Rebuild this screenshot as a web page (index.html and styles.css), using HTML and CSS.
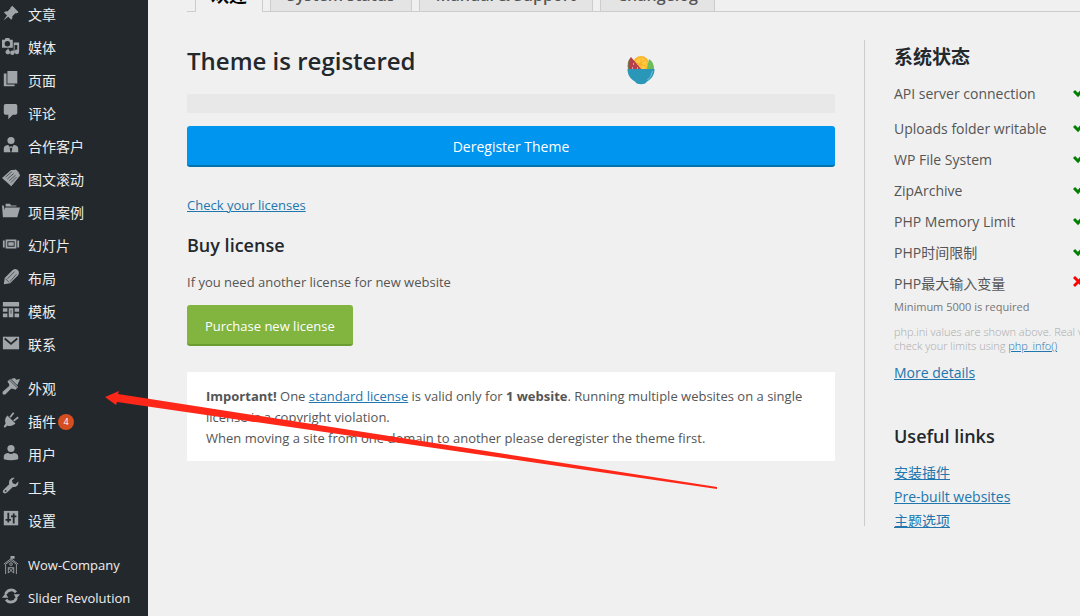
FILE: index.html
```html
<!DOCTYPE html>
<html lang="zh-CN">
<head>
<meta charset="utf-8">
<meta name="viewport" content="width=device-width, initial-scale=1">
<title>Theme is registered</title>
<link rel="stylesheet" href="styles.css">
</head>
<body>
<div class="app">
  <nav class="sidebar" aria-label="Admin menu">
    <ul class="menu">
      <li><a class="item" href="#"><svg class="icon" viewBox="0 0 20 20"><path d="M10.400 3l1-1 6.900 6.900-1 1a3.300 3.300 0 0 1-2.400.3l-3.400 3.500c.2 1.500-.2 2.800-1.200 3.800l-3.400-3.400-5.500 4.200 4.200-5.500-3.400-3.400c1-1 2.300-1.400 3.800-1.200l3.500-3.400c-.2-1 .1-1.600.9-1.800z"/></svg>文章</a></li>
      <li><a class="item" href="#"><svg class="icon" viewBox="0 0 20 20"><path fill-rule="evenodd" d="M1 3h2l1-2h4l1 2h3v9H0V3zm5 1.500a3 3 0 1 0 0 6 3 3 0 0 0 0-6zM13 6h6v10.500a2.500 2.500 0 1 1-2-2.400V9h-3v8.500A2.500 2.500 0 1 1 11.500 15H13zM6 13h1.500v1.500a2.500 2.500 0 1 1-1.500-.2z"/></svg>媒体</a></li>
      <li><a class="item" href="#"><svg class="icon" viewBox="0 0 20 20"><path d="M6 1h11v14H6zM2 4h3v12h9v2H2z"/></svg>页面</a></li>
      <li><a class="item" href="#"><svg class="icon" viewBox="0 0 20 20"><path d="M4 1h11q2 0 2 2v8q0 2-2 2h-3l-5 5v-5H4q-2 0-2-2V3q0-2 2-2z"/></svg>评论</a></li>
      <li><a class="item" href="#"><svg class="icon" viewBox="0 0 20 20"><circle cx="10" cy="5" r="4"/><path d="M2 18v-4c0-3 3-4 5-4l2 3 .5-2h1l.5 2 2-3c2 0 5 1 5 4v4h-7.500l1-4-1.500-1-1.500 1 1 4z"/></svg>合作客户</a></li>
      <li><a class="item" href="#"><svg class="icon" viewBox="0 0 20 20"><path d="M0 10 10 1l6 0 4 6-10 12z"/><path class="groove" d="M4 9l7-6M6 11l7-6M8 13l7-6M10 15l6-6"/><path class="thin" d="M14 1c3 0 5 3 5 7L10 19"/></svg>图文滚动</a></li>
      <li><a class="item" href="#"><svg class="icon" viewBox="0 0 20 20"><path d="M3.500 6H20l-3 11H1L0 4h2l1 5zM4 5V2h5l1 2h6v1z"/></svg>项目案例</a></li>
      <li><a class="item" href="#"><svg class="icon" viewBox="0 0 20 20"><path fill-rule="evenodd" d="M4 5h12v10H4zm2 2v6h8V7zM7 8h6v4H7zM1 6h2v8H1zM17 6h2v8h-2z"/></svg>幻灯片</a></li>
      <li><a class="item" href="#"><svg class="icon" viewBox="0 0 20 20"><path d="M2 18l1-7 8-8q3-3 6-1t1 6l-9 9z"/><path class="groove" d="M6 12l8-8M9 15l7-8M4 12l4 4"/></svg>布局</a></li>
      <li><a class="item" href="#"><svg class="icon" viewBox="0 0 20 20"><path d="M1 1h18v5H1zM1 8h5v4H1zM7.500 8h5v10h-5zM14 8h5v4h-5zM1 14h5v4H1zM14 14h5v4h-5z"/><path class="groove" d="M10 10v4"/></svg>模板</a></li>
      <li><a class="item" href="#"><svg class="icon" viewBox="0 0 20 20"><path d="M1 3h18v14H1z"/><path class="cut" d="M3 5l7 6 7-6"/></svg>联系</a></li>
    </ul>
    <ul class="menu">
      <li><a class="item" href="#"><svg class="icon" viewBox="0 0 20 20"><path d="M6 4l3-3 9 9-3 3-3-1-2 0-6 6q-2 1-3 0t0-3l7-6V7z"/><path d="M10 1l4-1 2 2 4-1-3 7z"/><path class="groove" d="M8 2l9 9"/></svg>外观</a></li>
      <li><a class="item" href="#"><svg class="icon" viewBox="0 0 20 20"><path d="M6 5l9 9c-3 3-7 3-9 2l-2 2q-2 1-2-1l2-3C3 11 3 8 6 5z"/><path class="line" d="M9 7l4-5M13 11l5-4"/></svg>插件<span class="badge">4</span></a></li>
      <li><a class="item" href="#"><svg class="icon" viewBox="0 0 20 20"><circle cx="10" cy="5" r="4"/><path d="M2 17v-3c0-3 3-4 5-4q3 2 6 0c2 0 5 1 5 4v3q-8 2-16 0z"/></svg>用户</a></li>
      <li><a class="item" href="#"><svg class="icon" viewBox="0 0 20 20"><path d="M18 5l-3 3-3-1-1-3 3-3C10 0 7 4 8 8l-6 6c-3 3 1 6 4 3l6-6c4 1 7-2 6-6z"/><circle class="hole" cx="4" cy="15.500" r="1"/></svg>工具</a></li>
      <li><a class="item" href="#"><svg class="icon" viewBox="0 0 20 20"><path d="M2 1h16v16H2z"/><path class="cut" d="M7 3v11M13 4v11M4 11h6M10 7h6"/></svg>设置</a></li>
    </ul>
    <ul class="menu">
      <li><a class="item" href="#"><svg class="icon tall" viewBox="0 0 20 20"><path class="thin" d="M4 20V9l6-4 6 4v11M2 9l8-6 8 6M10 4V0M7 19v-6h6v6M7 13l6 6M13 13l-6 6"/><circle class="thin" cx="10" cy="9" r="1.500"/><path d="M10 0h4v3h-4z"/></svg>Wow-Company</a></li>
      <li><a class="item" href="#"><svg class="icon" viewBox="0 0 20 20"><path class="ring" d="M4 8a6.500 6.500 0 0 1 11.500-2M16 12a6.500 6.500 0 0 1-11.500 2"/><path d="M13 8h7l-4 5zM0 12h7L4 7z"/></svg>Slider Revolution</a></li>
    </ul>
  </nav>

  <main class="main">
    <nav class="tabs" aria-label="Theme pages">
      <a class="tab active" href="#">欢迎</a>
      <a class="tab" href="#">System status</a>
      <a class="tab" href="#">Manual &amp; Support</a>
      <a class="tab" href="#">Changelog</a>
    </nav>
    <div class="columns">
      <section class="license">
        <div class="title-row">
          <h1>Theme is registered</h1>
          <svg class="bowl" viewBox="0 0 28 30" aria-hidden="true"><circle cx="14" cy="9" r="8" fill="#fbb62c"/><circle cx="14" cy="9" r="6" fill="#ffca42"/><path d="M14 4v10M9 8l10 3M9 12l9-7" stroke="#f7ad24"/><path d="M22 4q5 3 5 10h-7z" fill="#6cbd5a"/><path d="M4 2Q0 6 1 15h14z" fill="#b6404b"/><path d="M3 4Q0 8 2 15" fill="none" stroke="#6e7c47"/><path d="M6 9h1M5 13h1M10 13h1" stroke="#fff"/><path d="M.5 14h27c0 6-3 10-8 13-1 3-10 3-11 0C3.500 24 .5 20 .5 14z" fill="#2b97b8"/><path d="M25.500 16q-1 6-5 9" fill="none" stroke="#77c2d5"/></svg>
        </div>
        <div class="code-bar"></div>
        <button class="button primary" type="button">Deregister Theme</button>
        <a class="check" href="#">Check your licenses</a>
        <h2>Buy license</h2>
        <p class="lead">If you need another license for new website</p>
        <button class="button buy" type="button">Purchase new license</button>
        <p class="notice"><strong>Important!</strong> One <a href="#">standard license</a> is valid only for <strong>1 website</strong>. Running multiple websites on a single license is a copyright violation.<br>When moving a site from one domain to another please deregister the theme first.</p>
      </section>
      <aside class="status">
        <h2>系统状态</h2>
        <ul class="checks">
          <li class="first">API server connection<svg class="mark" viewBox="0 0 14 12"><path d="M1 5l4 4 7-8"/></svg></li>
          <li>Uploads folder writable<svg class="mark" viewBox="0 0 14 12"><path d="M1 5l4 4 7-8"/></svg></li>
          <li>WP File System<svg class="mark" viewBox="0 0 14 12"><path d="M1 5l4 4 7-8"/></svg></li>
          <li>ZipArchive<svg class="mark" viewBox="0 0 14 12"><path d="M1 5l4 4 7-8"/></svg></li>
          <li>PHP Memory Limit<svg class="mark" viewBox="0 0 14 12"><path d="M1 5l4 4 7-8"/></svg></li>
          <li>PHP时间限制<svg class="mark" viewBox="0 0 14 12"><path d="M1 5l4 4 7-8"/></svg></li>
          <li>PHP最大输入变量<svg class="mark bad" viewBox="0 0 14 12"><path d="M1 1l9 9M10 1l-9 9"/></svg></li>
        </ul>
        <p class="minimum">Minimum 5000 is required</p>
        <p class="hint">php.ini values are shown above. Real values may vary,<br>check your limits using <a href="#">php_info()</a></p>
        <a class="more" href="#">More details</a>
        <h2 class="links-title">Useful links</h2>
        <ul class="links">
          <li><a href="#">安装插件</a></li>
          <li><a href="#">Pre-built websites</a></li>
          <li><a href="#">主题选项</a></li>
        </ul>
      </aside>
    </div>
  </main>
  <svg class="arrow" viewBox="0 0 612 100" aria-hidden="true"><path d="M0 7L14 1l-1 3 599 93v2L12 12l-1 3z"/></svg>
</div>
</body>
</html>
```
FILE: styles.css
```css
* { box-sizing: border-box; }
body {
  margin: 0;
  background: #f0f0f0;
  color: #555;
  font: 14px/20px "Open Sans", "Noto Sans CJK SC", sans-serif;
}
h1, h2, p, ul { margin: 0; padding: 0; }
ul { list-style: none; }
a { color: #2176ae; }
h1, h2 { color: #23282d; font-weight: 600; }
.app { position: relative; display: flex; height: 100vh; overflow: hidden; }

.sidebar { flex: none; width: 148px; margin-top: -2px; background: #23282d; }
.menu { margin-bottom: 11px; }
.item {
  display: flex;
  align-items: center;
  height: 33px;
  padding-left: 2px;
  color: #eee;
  font-size: 14px;
  text-decoration: none;
  white-space: nowrap;
}
.menu:last-child .item { font-size: 13px; }
.icon { flex: none; width: 18px; height: 18px; margin: 0 8px 3px 0; fill: #a0a5aa; }
.icon.tall { height: 20px; margin-bottom: 0; }
.cut { fill: none; stroke: #23282d; stroke-width: 2; }
.groove { fill: none; stroke: #23282d; stroke-width: 1; stroke-opacity: .7; }
.line { fill: none; stroke: #a0a5aa; stroke-width: 2; }
.thin { fill: none; stroke: #a0a5aa; stroke-width: 1; }
.ring { fill: none; stroke: #a0a5aa; stroke-width: 3; }
.hole { fill: #23282d; }
.badge {
  width: 16px;
  margin-left: 2px;
  border-radius: 8px;
  background: #d54e21;
  color: #fff;
  font-size: 9px;
  line-height: 16px;
  text-align: center;
}

.main { flex: 1; min-width: 0; padding-left: 39px; }
.tabs {
  display: flex;
  gap: 7px;
  height: 36px;
  margin-top: -24px;
  padding-left: 8px;
  border-bottom: 1px solid #ccc;
}
.tab {
  height: 35px;
  padding: 6px 16px;
  border: 1px solid #ccc;
  border-bottom: 0;
  background: #e4e4e4;
  color: #555;
  font-size: 16px;
  font-weight: 600;
  line-height: 24px;
  text-decoration: none;
  white-space: nowrap;
}
.active { height: 36px; padding: 6px 15px; background: #f0f0f0; color: #000; font-size: 18px; font-weight: 700; }
.columns { display: flex; gap: 29px; padding-top: 28px; }
.license { flex: 1; min-width: 0; }
.title-row { display: flex; align-items: center; justify-content: space-between; height: 42px; }
h1 { font-size: 24px; line-height: 42px; }
.bowl { width: 28px; height: 30px; margin: 18px 180px 0 0; }
.code-bar { height: 19px; margin: 12px 0 13px; background: #e8e8e8; }
.button { display: block; border: 0; border-radius: 3px; color: #fff; font: 14px/20px "Open Sans", sans-serif; cursor: pointer; }
.primary { width: 100%; height: 41px; padding-top: 4px; border-bottom: 2px solid #0073aa; background: #0095ee; }
.check { display: block; width: fit-content; margin: 28px 0 18px; font-size: 13px; }
h2 { font-size: 18px; line-height: 24px; }
.lead { margin: 15px 0 13px; font-size: 13px; }
.buy { height: 41px; padding: 2px 18px 0; border-bottom: 2px solid #6b9e30; background: #82b440; font-size: 13px; }
.notice { margin-top: 26px; padding: 14px 19px 12px; background: #fff; font-size: 13px; line-height: 21px; }

.status {
  flex: none;
  width: 216px;
  height: 486px;
  padding-left: 29px;
  border-left: 1px solid #ccc;
  white-space: nowrap;
}
.status h2 { margin: 5px 0 9px; }
.status h2:first-child { font-size: 19px; font-weight: 700; }
.checks li { display: flex; align-items: center; justify-content: space-between; width: 193px; height: 31px; }
.checks .first { height: 35px; padding-bottom: 4px; }
.mark { flex: none; width: 14px; height: 12px; margin-bottom: 4px; fill: none; stroke: #008000; stroke-width: 3; }
.bad { stroke: #f00; }
.minimum { color: #777; font-size: 11px; line-height: 16px; }
.hint { margin: 10px 0 10px; color: #aaa; font-size: 11px; font-weight: 300; line-height: 14px; }
.more { display: block; width: fit-content; }
.status .links-title { margin: 41px 0 13px; }
.links li { height: 24px; line-height: 24px; }

.arrow { position: absolute; left: 105px; top: 390px; width: 612px; height: 100px; fill: #ff2718; pointer-events: none; }
```
